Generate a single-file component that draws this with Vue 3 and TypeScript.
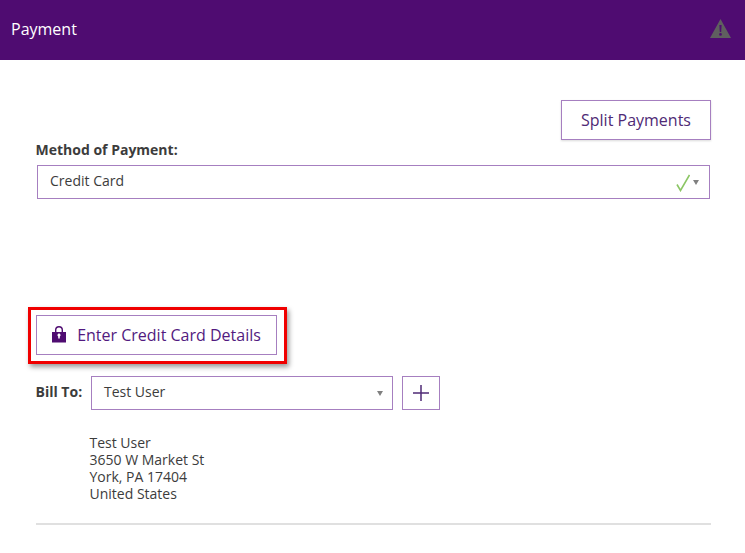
<script setup lang="ts">
const addressLines: string[] = ['Test User', '3650 W Market St', 'York, PA 17404', 'United States']
</script>

<template>
  <div class="page">
    <header class="topbar">
      <span class="title">Payment</span>
      <svg class="warn" width="21" height="19" viewBox="0 0 21 19" aria-hidden="true">
        <path fill="#5f5f5f" fill-rule="evenodd" d="M10.5 0 21 19H0ZM9.4 6 9.8 13h1.4l.4-7ZM10.5 14a1.4 1.4 0 1 0 0 2.8 1.4 1.4 0 0 0 0-2.8Z" />
      </svg>
    </header>

    <main class="content">
      <div class="split-row">
        <button class="btn split" type="button">Split Payments</button>
      </div>

      <label class="method-label">Method of Payment:</label>
      <div class="select method">
        <span>Credit Card</span>
        <svg class="check" width="14" height="18" viewBox="0 0 14 18" aria-hidden="true">
          <path d="M1 10.5 4.5 16.5 13.5 1" fill="none" stroke="#8cc665" stroke-width="1.6" />
        </svg>
        <span class="caret"></span>
      </div>

      <div class="highlight">
        <button class="btn card" type="button">
          <svg width="14" height="17" viewBox="0 0 14 17" aria-hidden="true">
            <path fill="#4f0c71" fill-rule="evenodd" d="M0 6H3V4a4 4 0 0 1 8 0V6H14V16.6H0ZM4.4 6H9.6V4a2.6 2.6 0 0 0-5.2 0ZM7 7.6a1.5 1.5 0 0 0-.8 2.8V12.4H7.8V10.4A1.5 1.5 0 0 0 7 7.6Z" />
          </svg>
          <span>Enter Credit Card Details</span>
        </button>
      </div>

      <div class="bill-row">
        <span class="bill-label">Bill To:</span>
        <div class="select bill">
          <span>Test User</span>
          <span class="caret"></span>
        </div>
        <button class="btn plus" type="button" aria-label="Add">
          <svg width="16" height="16" viewBox="0 0 16 16" aria-hidden="true">
            <path d="M8 0v16M0 8h16" stroke="#4f2a75" stroke-width="1.5" fill="none" />
          </svg>
        </button>
      </div>

      <address class="address">
        <div v-for="line in addressLines" :key="line">{{ line }}</div>
      </address>

      <hr class="rule" />
    </main>
  </div>
</template>

<style>
html, body { margin: 0; background: #fff; }
</style>

<style scoped>
.page {
  width: 745px;
  height: 553px;
  overflow: hidden;
  background: #fff;
  font-family: "Open Sans", "Liberation Sans", sans-serif;
  font-size: 14px;
  color: #3c3c3c;
}
.topbar {
  height: 60px;
  box-sizing: border-box;
  background: #4f0c71;
  display: flex;
  align-items: center;
  justify-content: space-between;
  padding: 0 14px 2px 11px;
}
.title { color: #fff; font-size: 16px; }
.warn { margin-top: -1px; }
.content {
  padding: 40px 34px 0 36px;
  display: flex;
  flex-direction: column;
  align-items: flex-start;
}
.split-row { align-self: stretch; display: flex; justify-content: flex-end; }
.btn {
  box-sizing: border-box;
  background: #fff;
  border: 1px solid #a67fc0;
  font-family: inherit;
  color: #4f2a75;
  padding: 0;
  display: flex;
  align-items: center;
  justify-content: center;
}
.split {
  width: 150px;
  height: 40px;
  font-size: 16px;
  box-shadow: 0 1px 2px rgba(0, 0, 0, 0.15);
}
.method-label {
  font-weight: 700;
  line-height: 20px;
  margin-left: -0.5px;
  color: #3c3c3c;
}
.select {
  box-sizing: border-box;
  height: 34px;
  border: 1px solid #a67fc0;
  display: flex;
  align-items: center;
  padding: 0 9px 4px 12px;
  background: #fff;
}
.select > span:first-child { flex: 1; }
.method {
  width: 673px;
  margin: 5px 0 0 1px;
  padding-right: 10px;
}
.check { margin-right: 3px; margin-top: 5px; }
.caret {
  width: 0;
  height: 0;
  border-left: 3.5px solid transparent;
  border-right: 3.5px solid transparent;
  border-top: 5px solid #808080;
  margin-top: 4px;
}
.highlight {
  box-sizing: border-box;
  margin: 108px 0 0 -8px;
  width: 259px;
  height: 57px;
  border: 3px solid #f00000;
  padding: 5px;
  box-shadow: 2px 3px 5px rgba(0, 0, 0, 0.4);
  background: #fff;
}
.card {
  width: 241px;
  height: 40px;
  font-size: 16px;
  gap: 11px;
  padding-bottom: 1px;
  color: #521a80;
}
.bill-row {
  display: flex;
  align-items: center;
  margin-top: 11px;
}
.bill-label { font-weight: 700; width: 55px; margin: 0 0 2px -0.5px; padding-right: 0.5px; }
.bill { width: 302px; margin-top: 1px; }
.plus { width: 38px; height: 34px; margin-left: 9px; }
.address {
  font-style: normal;
  line-height: 17px;
  margin: 24px 0 0 53.5px;
}
.rule {
  align-self: stretch;
  margin: 21px 0 0;
  border: 0;
  height: 2px;
  background: #e0e0e0;
  width: 675px;
}
</style>
